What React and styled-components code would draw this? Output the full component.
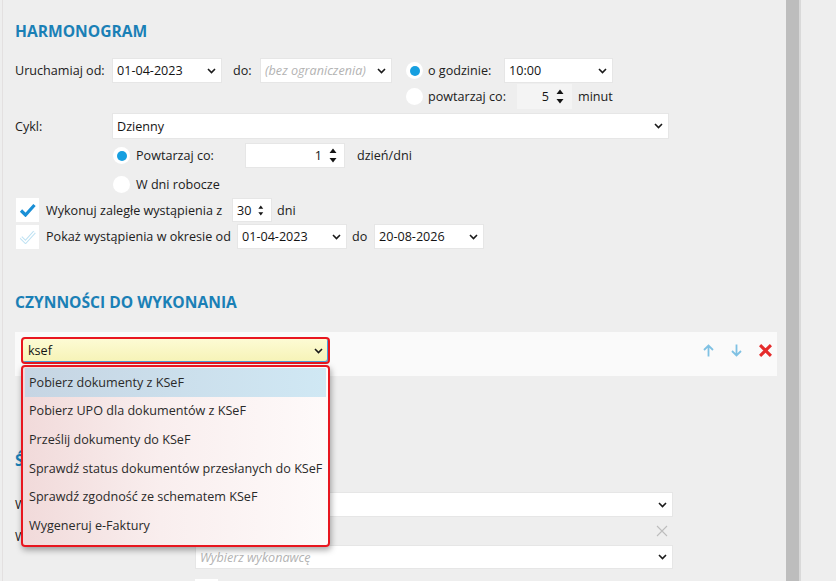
import React from "react"
import styled, { createGlobalStyle } from "styled-components"

const GlobalStyle = createGlobalStyle`
  html, body {
    margin: 0;
    padding: 0;
    background: #eeeeee;
  }
  body {
    font-family: "Open Sans", "Noto Sans", sans-serif;
    font-size: 12.6px;
    color: #1f1f1f;
  }
  * {
    box-sizing: border-box;
  }
`

const Page = styled.div`
  display: flex;
  height: 581px;
  overflow: hidden;
`

const Content = styled.div`
  width: 784px;
  margin-left: 2px;
  padding: 22px 0 0 12px;
  border-left: 1px solid #e3e0e0;
`

const Scrollbar = styled.div`
  width: 13px;
  background: #bdbdbd;
  border-right: 2px solid #d9d9d9;
  box-sizing: content-box;
`

const Heading = styled.h2`
  margin: ${p => p.$mt || 0}px 0 0;
  font-size: 15.6px;
  font-weight: 700;
  line-height: 18px;
  color: #1a80b6;
  white-space: nowrap;
`

const Block = styled.div`
  display: flex;
  align-items: flex-start;
  margin-top: ${p => p.$mt || 0}px;
`

const Column = styled.div`
  display: flex;
  flex-direction: column;
  gap: 1px;
  margin-left: ${p => p.$ml || 0}px;
`

const Row = styled.div`
  display: flex;
  align-items: center;
  height: ${p => p.$h || 25}px;
  margin-top: ${p => p.$mt || 0}px;
  padding-left: ${p => p.$indent || 0}px;
`

const Label = styled.span`
  flex-shrink: 0;
  width: ${p => (p.$w ? `${p.$w}px` : "auto")};
  margin-left: ${p => p.$ml || 0}px;
  padding-top: ${p => p.$pt || 0}px;
  white-space: nowrap;
  color: #202020;
`

const Field = styled.div`
  display: flex;
  align-items: center;
  justify-content: ${p => (p.$num ? "flex-end" : "flex-start")};
  flex-shrink: 0;
  width: ${p => p.$w}px;
  height: ${p => p.$h || 25}px;
  margin-left: ${p => p.$ml || 0}px;
  padding: 0 ${p => (p.$num ? 7 : 0)}px 0 4px;
  background: ${p => (p.$disabled ? "#f4f4f4" : p.$clear ? "transparent" : "#ffffff")};
  border: 1px solid ${p => (p.$disabled || p.$clear ? "transparent" : "#e6e6e6")};
  white-space: nowrap;
`

const Value = styled.span`
  color: #141414;
  margin-right: ${p => (p.$num ? 7 : 0)}px;
`

const Placeholder = styled.span`
  color: #b3b3b3;
  font-style: italic;
`

const ChevronSvg = styled.svg`
  margin-left: auto;
  margin-right: 5px;
  flex-shrink: 0;
`

const ClearIcon = styled.span`
  display: flex;
  margin-left: auto;
  margin-right: 4px;
`

const Radio = styled.span`
  display: flex;
  align-items: center;
  justify-content: center;
  flex-shrink: 0;
  width: 17px;
  height: 17px;
  border-radius: 50%;
  background: #ffffff;
  margin-left: ${p => p.$ml || 0}px;
  &::after {
    content: "";
    width: 10px;
    height: 10px;
    border-radius: 50%;
    background: ${p => (p.$checked ? "#169fe0" : "transparent")};
  }
`

const CheckBox = styled.span`
  display: flex;
  align-items: center;
  justify-content: center;
  flex-shrink: 0;
  width: 23px;
  height: 24px;
  margin-left: 1px;
  background: #ffffff;
`

const Panel = styled.div`
  position: relative;
  z-index: 2;
  display: flex;
  align-items: flex-start;
  width: 762px;
  height: 44px;
  margin-top: 21px;
  padding: 5px 5px 0 6px;
  background: #fafafa;
`

const ComboWrap = styled.div`
  position: relative;
  display: flex;
  align-items: center;
  width: 309px;
  height: 27px;
  padding-left: 5px;
  border: 2px solid #e8161f;
  border-radius: 4px;
  background: linear-gradient(#fdfbd4, #f6f3b6);
  box-shadow: inset -1px -1px 0 #4a9fdc;
`

const DropList = styled.ul`
  position: absolute;
  top: 26px;
  left: -2px;
  width: 309px;
  height: 182px;
  margin: 0;
  padding: 1px 2px 0;
  list-style: none;
  border: 2px solid #e8161f;
  border-radius: 4px;
  background: linear-gradient(to right, #f1dada, #f9eeee 45%, #fefafa);
  box-shadow: 1px 3px 6px rgba(0, 0, 0, 0.35);
`

const DropItem = styled.li`
  display: flex;
  align-items: center;
  height: 28.6px;
  padding-left: 4px;
  color: #2a2a2a;
  white-space: nowrap;
  background: ${p => (p.$active ? "linear-gradient(to right, #c6d5e3, #d0e8f4)" : "transparent")};
`

const Actions = styled.div`
  display: flex;
  align-items: center;
  gap: 17px;
  height: 27px;
  margin-left: auto;
`

const SmallBox = styled.div`
  width: 23px;
  height: 10px;
  margin: 10px 0 0 180px;
  background: #ffffff;
`

const Chevron = () => (
  <ChevronSvg width="9" height="6" viewBox="0 0 9 6">
    <path d="M1 1l3.5 3.5L8 1" fill="none" stroke="#1a1a1a" strokeWidth="1.6" />
  </ChevronSvg>
)

const Spinner = () => (
  <svg width="8" height="15" viewBox="0 0 8 15">
    <path d="M4 0.5L7.5 5H0.5z M0.5 10h7L4 14.5z" fill="#141414" />
  </svg>
)

const Check = ({ light }) => (
  <svg width="17" height="14" viewBox="0 0 17 14">
    {light ? (
      <>
        <path d="M2 7.5l4.5 4.5L15.5 2" fill="none" stroke="#bfe2f3" strokeWidth="3.4" />
        <path d="M2 7.5l4.5 4.5L15.5 2" fill="none" stroke="#ffffff" strokeWidth="1.4" />
      </>
    ) : (
      <path d="M2 7.5l4.5 4.5L15.5 2" fill="none" stroke="#1a8fd6" strokeWidth="3.2" />
    )}
  </svg>
)

const Arrow = ({ down }) => (
  <svg width="11" height="13" viewBox="0 0 11 13" style={down ? { transform: "rotate(180deg)" } : undefined}>
    <path d="M5.5 1.5V12.5 M1 6l4.5-4.5L10 6" fill="none" stroke="#7fc1e3" strokeWidth="1.8" />
  </svg>
)

const Cross = ({ color, width, size }) => (
  <svg width={size} height={size} viewBox="0 0 12 12">
    <path d="M1 1l10 10 M11 1L1 11" fill="none" stroke={color} strokeWidth={width} />
  </svg>
)

const tasks = [
  "Pobierz dokumenty z KSeF",
  "Pobierz UPO dla dokumentów z KSeF",
  "Prześlij dokumenty do KSeF",
  "Sprawdź status dokumentów przesłanych do KSeF",
  "Sprawdź zgodność ze schematem KSeF",
  "Wygeneruj e-Faktury",
]

export default function App() {
  return (
    <Page>
      <GlobalStyle />
      <Content>
        <Heading>HARMONOGRAM</Heading>

        <Block $mt={18}>
          <Row>
            <Label $w={97}>Uruchamiaj od:</Label>
            <Field $w={110}><Value>01-04-2023</Value><Chevron /></Field>
            <Label $ml={11} $w={27}>do:</Label>
            <Field $w={132}><Placeholder>(bez ograniczenia)</Placeholder><Chevron /></Field>
          </Row>
          <Column $ml={14}>
            <Row>
              <Radio $checked />
              <Label $ml={5} $w={76}>o godzinie:</Label>
              <Field $w={109}><Value>10:00</Value><Chevron /></Field>
            </Row>
            <Row>
              <Radio />
              <Label $ml={5} $w={89}>powtarzaj co:</Label>
              <Field $w={55} $num $disabled><Value $num>5</Value><Spinner /></Field>
              <Label $ml={6}>minut</Label>
            </Row>
          </Column>
        </Block>

        <Row $h={26} $mt={4}>
          <Label $w={97}>Cykl:</Label>
          <Field $w={557} $h={26}><Value>Dzienny</Value><Chevron /></Field>
        </Row>

        <Row $mt={4} $indent={98}>
          <Radio $checked />
          <Label $ml={6} $w={109}>Powtarzaj co:</Label>
          <Field $w={100} $num><Value $num>1</Value><Spinner /></Field>
          <Label $ml={12}>dzień/dni</Label>
        </Row>

        <Row $mt={4} $indent={98}>
          <Radio />
          <Label $ml={6}>W dni robocze</Label>
        </Row>

        <Row $h={24} $mt={1}>
          <CheckBox><Check /></CheckBox>
          <Label $ml={7} $w={186}>Wykonuj zaległe wystąpienia z</Label>
          <Field $w={40} $h={24} $num><Value $num>30</Value><Spinner /></Field>
          <Label $ml={5}>dni</Label>
        </Row>

        <Row $mt={2}>
          <CheckBox><Check light /></CheckBox>
          <Label $ml={7} $w={191}>Pokaż wystąpienia w okresie od</Label>
          <Field $w={110}><Value>01-04-2023</Value><Chevron /></Field>
          <Label $ml={5} $w={22}>do</Label>
          <Field $w={110}><Value>20-08-2026</Value><Chevron /></Field>
        </Row>

        <Heading $mt={44}>CZYNNOŚCI DO WYKONANIA</Heading>

        <Panel>
          <ComboWrap>
            <Value>ksef</Value>
            <Chevron />
            <DropList>
              {tasks.map((t, i) => (
                <DropItem key={t} $active={i === 0}>{t}</DropItem>
              ))}
            </DropList>
          </ComboWrap>
          <Actions>
            <Arrow />
            <Arrow down />
            <Cross color="#e52b2b" width={2.8} size={13} />
          </Actions>
        </Panel>

        <Heading $mt={75}>ŚRODOWISKO</Heading>

        <Row $mt={23}>
          <Label $w={180}>Wykonawca:</Label>
          <Field $w={478}><Chevron /></Field>
        </Row>
        <Row $h={28}>
          <Label $w={180} $pt={10}>W imieniu:</Label>
          <Field $w={478} $h={28} $clear>
            <ClearIcon>
              <Cross color="#bdbdbd" width={1.1} size={12} />
            </ClearIcon>
          </Field>
        </Row>
        <Row $h={24} $indent={180}>
          <Field $w={478} $h={24}><Placeholder>Wybierz wykonawcę</Placeholder><Chevron /></Field>
        </Row>
        <SmallBox />
      </Content>
      <Scrollbar />
    </Page>
  )
}
